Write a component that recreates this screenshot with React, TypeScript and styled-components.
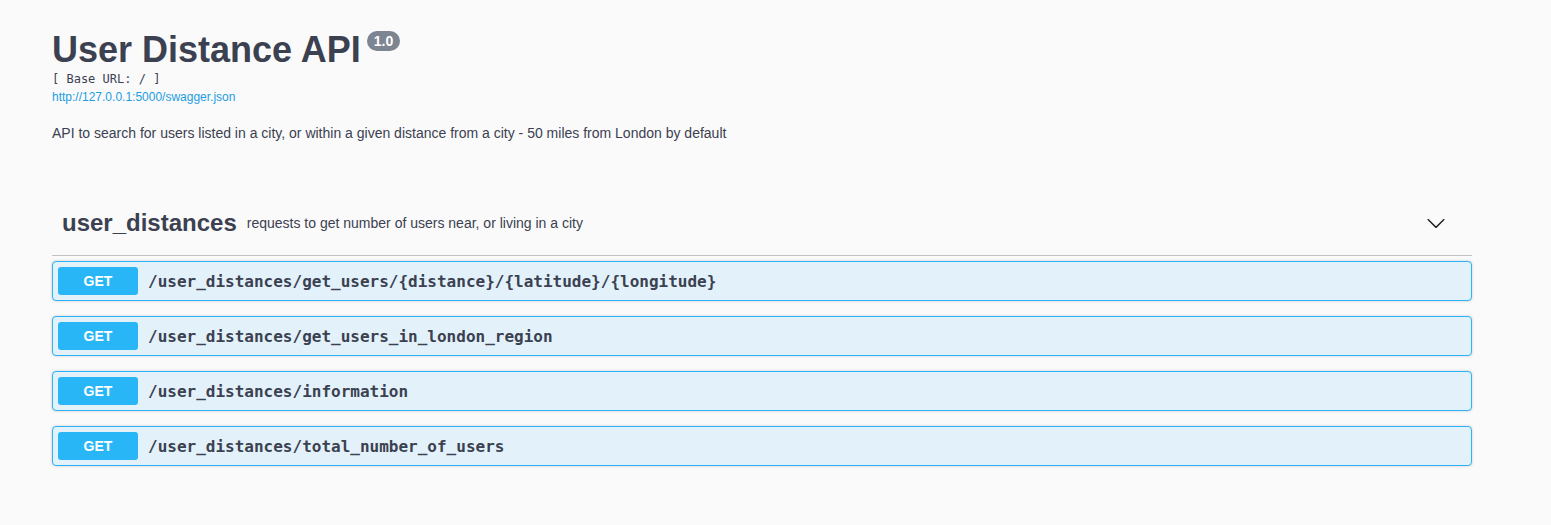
import React from "react";
import styled, { createGlobalStyle } from "styled-components";

const Global = createGlobalStyle`
  html, body { margin: 0; padding: 0; background: #fafafa; }
  body { font-family: "Liberation Sans", Arial, sans-serif; color: #3b4151; }
  * { box-sizing: border-box; }
`;

const Page = styled.div`
  width: 1551px;
  min-height: 525px;
  padding: 30px 0 0 52px;
`;

const Wrapper = styled.div`
  width: 1420px;
`;

const Info = styled.div`
  display: flex;
  flex-direction: column;
`;

const TitleRow = styled.div`
  display: flex;
  align-items: flex-start;
`;

const Title = styled.h2`
  margin: 0;
  font-size: 36px;
  font-weight: 700;
  line-height: 40px;
  color: #3b4151;
`;

const Version = styled.span`
  margin: 1px 0 0 6px;
  background: #7d8492;
  color: #fff;
  border-radius: 57px;
  font-size: 14px;
  font-weight: 700;
  line-height: 20px;
  padding: 0 7px;
  height: 20px;
`;

const BaseUrl = styled.pre`
  margin: 1px 0 0 0;
  font-family: "DejaVu Sans Mono", monospace;
  font-size: 12px;
  line-height: 16px;
  color: #3b4151;
`;

const Link = styled.a`
  font-size: 12px;
  line-height: 16px;
  color: #1b9de2;
  text-decoration: none;
`;

const Description = styled.p`
  margin: 18px 0 0 0;
  font-size: 14px;
  line-height: 20px;
  color: #3b4151;
`;

const Section = styled.section`
  margin-top: 48px;
`;

const TagHeader = styled.div`
  display: flex;
  align-items: center;
  padding: 10px 20px 10px 10px;
  height: 65px;
  border-bottom: 1px solid rgba(59, 65, 81, 0.3);
  margin-bottom: 5px;
`;

const TagName = styled.span`
  font-size: 24px;
  font-weight: 700;
  color: #3b4151;
`;

const TagDesc = styled.small`
  font-size: 14px;
  margin-left: 10px;
  color: #3b4151;
  flex: 1;
`;

const Chevron = styled.svg`
  width: 20px;
  height: 20px;
  margin-right: 6px;
  fill: #222;
`;

const OpList = styled.div`
  display: flex;
  flex-direction: column;
  gap: 15px;
`;

const OpBlock = styled.div`
  display: flex;
  align-items: center;
  height: 40px;
  padding: 5px;
  border: 1px solid #2cb3f7;
  background: #e3f2fa;
  border-radius: 4px;
  box-shadow: 0 0 3px rgba(0, 0, 0, 0.19);
`;

const Method = styled.span`
  width: 80px;
  height: 28px;
  line-height: 28px;
  text-align: center;
  background: #29b6f6;
  color: #fff;
  border-radius: 3px;
  font-size: 14px;
  font-weight: 700;
`;

const Path = styled.span`
  padding: 0 10px;
  font-family: "DejaVu Sans Mono", monospace;
  font-size: 16px;
  font-weight: 700;
  color: #3b4151;
`;

const paths = [
  "/user_distances/get_users/{distance}/{latitude}/{longitude}",
  "/user_distances/get_users_in_london_region",
  "/user_distances/information",
  "/user_distances/total_number_of_users",
];

export default function App() {
  return (
    <>
      <Global />
      <Page>
        <Wrapper>
          <Info>
            <TitleRow>
              <Title>User Distance API</Title>
              <Version>1.0</Version>
            </TitleRow>
            <BaseUrl>[ Base URL: / ]</BaseUrl>
            <div>
              <Link href="#">http://127.0.0.1:5000/swagger.json</Link>
            </div>
            <Description>
              API to search for users listed in a city, or within a given distance from a city - 50 miles from London by default
            </Description>
          </Info>
          <Section>
            <TagHeader>
              <TagName>user_distances</TagName>
              <TagDesc>requests to get number of users near, or living in a city</TagDesc>
              <Chevron viewBox="0 0 20 20">
                <path d="M17.418 6.109c.272-.268.709-.268.979 0s.271.701 0 .969l-7.908 7.83c-.27.268-.707.268-.979 0l-7.908-7.83c-.27-.268-.27-.701 0-.969.271-.268.709-.268.979 0L10 13.25l7.418-7.141z" />
              </Chevron>
            </TagHeader>
            <OpList>
              {paths.map((p) => (
                <OpBlock key={p}>
                  <Method>GET</Method>
                  <Path>{p}</Path>
                </OpBlock>
              ))}
            </OpList>
          </Section>
        </Wrapper>
      </Page>
    </>
  );
}
